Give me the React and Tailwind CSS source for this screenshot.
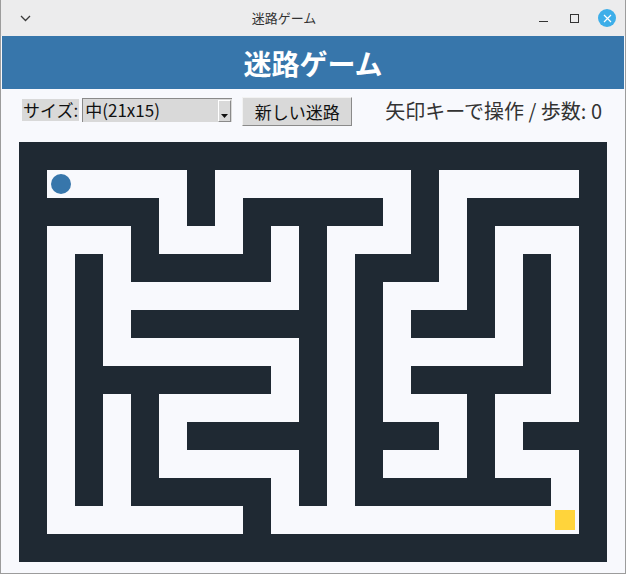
import React from 'react';

const MAZE = [
  '#####################',
  '#.....#.......#.....#',
  '#####.#.#####.#.#####',
  '#...#...#.#...#.#...#',
  '#.#.#####.#.###.#.#.#',
  '#.#.......#.#...#.#.#',
  '#.#.#######.#.###.#.#',
  '#.#.......#.#.....#.#',
  '#.#######.#.#.#####.#',
  '#.#.#.....#.#...#...#',
  '#.#.#.#####.###.#.###',
  '#.#.#.....#.#...#...#',
  '#.#.#####.#.#######.#',
  '#.......#...........#',
  '#####################',
];

const PLAYER = { r: 1, c: 1 };
const GOAL = { r: 13, c: 19 };

const font = { fontFamily: '"Noto Sans CJK JP", "Noto Sans", sans-serif' };

const TitleBar = () => (
  <div className="h-[36px] bg-[#ececed] flex items-center relative shrink-0">
    <svg className="ml-[19px]" width="11" height="7" viewBox="0 0 11 7">
      <path d="M1 1 L5.5 5.5 L10 1" fill="none" stroke="#3a3a3a" strokeWidth="1.3" />
    </svg>
    <div className="absolute inset-y-0 left-0 right-[58px] flex items-center justify-center text-[13px] text-[#333]" style={font}>
      迷路ゲーム
    </div>
    <div className="ml-auto flex items-center mr-[9px]">
      <div className="w-[9px] h-[1.5px] bg-[#333] mt-[7px] mr-[22px]" />
      <div className="w-[9px] h-[9px] border-[1.5px] border-[#333] mr-[19px]" />
      <div className="w-[18px] h-[18px] rounded-full bg-[#3daee9] flex items-center justify-center">
        <svg width="9" height="9" viewBox="0 0 9 9">
          <path d="M1 1 L8 8 M8 1 L1 8" stroke="#fff" strokeWidth="1.2" />
        </svg>
      </div>
    </div>
  </div>
);

const Controls = () => (
  <div className="h-[53px] flex items-start pt-[8px] pl-[21px] pr-[23px] shrink-0" style={font}>
    <div className="mt-[2px] h-[22px] px-[1px] bg-[#d9d9d9] text-[17px] leading-[22px] text-[#111]">サイズ:</div>
    <div className="ml-[3px] mt-[1px] w-[150px] h-[24px] bg-[#d9d9d9] border-t border-l border-[#8a8a8a] flex relative">
      <span className="pl-[2px] text-[17px] leading-[22px] text-[#111]">中(21x15)</span>
      <div className="absolute right-[1px] top-[1px] w-[13px] h-[22px] bg-[#d9d9d9] border-l border-t border-white border-r border-b border-r-[#8a8a8a] border-b-[#8a8a8a] flex items-end justify-center pb-[3px]">
        <svg width="7" height="4" viewBox="0 0 7 4">
          <path d="M0 0 L7 0 L3.5 4 Z" fill="#111" />
        </svg>
      </div>
    </div>
    <button className="ml-[10px] w-[110px] h-[29px] bg-[#d9d9d9] border-t border-l border-[#f2f2f2] border-r border-b border-r-[#8a8a8a] border-b-[#8a8a8a] text-[17px] leading-[27px] text-[#111]">
      新しい迷路
    </button>
    <div className="ml-auto mt-[1px] text-[20px] leading-[26px] text-[#333]">矢印キーで操作 / 歩数: 0</div>
  </div>
);

const Maze = () => (
  <div className="ml-[18px] grid grid-cols-[repeat(21,28px)] grid-rows-[repeat(15,28px)] w-[588px]">
    {MAZE.map((row, r) =>
      row.split('').map((ch, c) => (
        <div
          key={`${r}-${c}`}
          className={`flex items-center justify-center ${ch === '#' ? 'bg-[#1f2933]' : 'bg-[#f8f9fd]'}`}
        >
          {r === PLAYER.r && c === PLAYER.c && <div className="w-[20px] h-[20px] rounded-full bg-[#3776ab]" />}
          {r === GOAL.r && c === GOAL.c && <div className="w-[20px] h-[20px] bg-[#ffd43b]" />}
        </div>
      ))
    )}
  </div>
);

export default function App() {
  return (
    <div className="w-[626px] h-[574px] bg-[#f8f9fd] border-x border-b border-[#9c9c9c] flex flex-col overflow-hidden">
      <TitleBar />
      <div className="flex-1 flex flex-col">
        <div className="h-[53px] bg-[#3776ab] flex items-center justify-center text-white font-bold text-[28px] mx-[1px] shrink-0" style={font}>
          迷路ゲーム
        </div>
        <Controls />
        <Maze />
      </div>
    </div>
  );
}
